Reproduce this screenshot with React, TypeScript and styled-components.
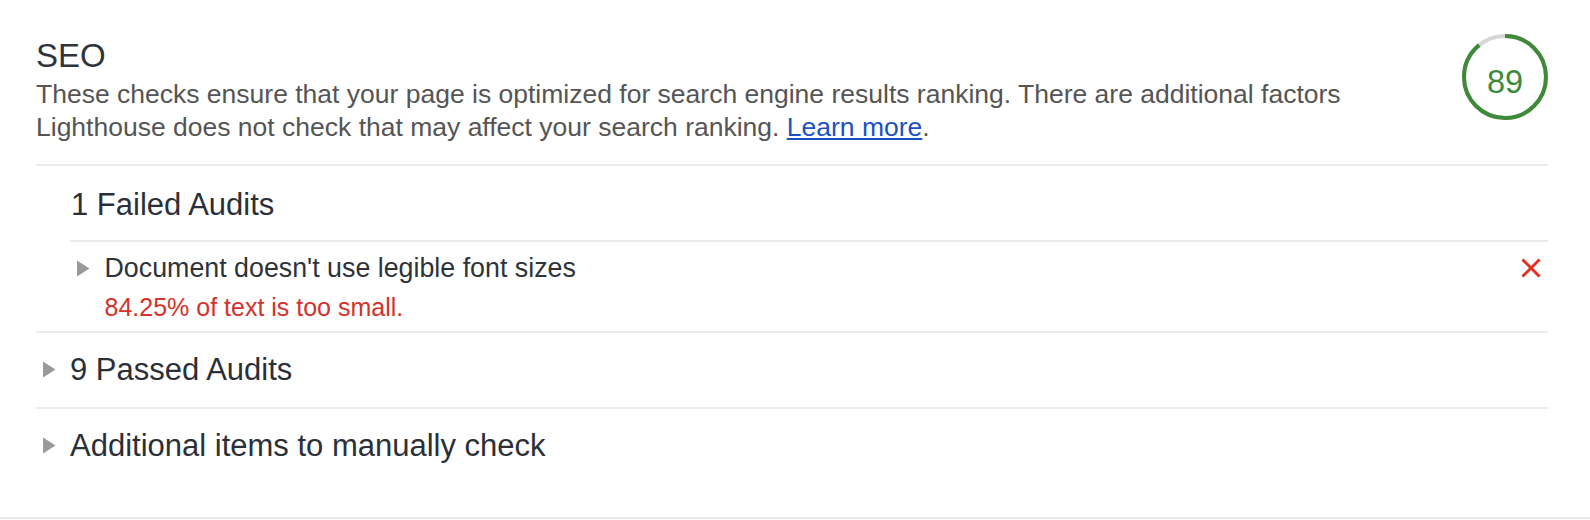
import React from "react";
import styled, { createGlobalStyle } from "styled-components";

const GlobalStyle = createGlobalStyle`
  html, body {
    margin: 0;
    padding: 0;
    background: #ffffff;
  }
  body {
    font-family: "Liberation Sans", Arial, Helvetica, sans-serif;
    -webkit-font-smoothing: antialiased;
  }
`;

const Section = styled.section`
  padding: 0 42px 34px 36px;
  border-bottom: 2px solid #e8e8e8;
`;

const Header = styled.header`
  display: flex;
  align-items: flex-start;
  gap: 40px;
  padding: 34px 0 20px;
  border-bottom: 2px solid #ebebeb;
`;

const HeaderText = styled.div`
  flex: 1;
  min-width: 0;
`;

const Title = styled.h2`
  margin: 0;
  font-size: 33px;
  line-height: 44px;
  font-weight: 400;
  color: #2f353d;
`;

const Description = styled.p`
  margin: 0;
  font-size: 26.5px;
  line-height: 33px;
  color: #555555;
`;

const Link = styled.a`
  color: #1a52c4;
  text-decoration: underline;
  text-underline-offset: 2px;
`;

const Gauge = styled.div`
  display: grid;
  width: 86px;
  height: 86px;
  flex: none;
  & > * {
    grid-area: 1 / 1;
  }
`;

const GaugeValue = styled.span`
  justify-self: center;
  align-self: center;
  padding-top: 9px;
  font-size: 32.5px;
  line-height: 32px;
  color: #3e8a3a;
`;

const GroupTitle = styled.div<{ $indent: number; $top?: number }>`
  display: flex;
  align-items: center;
  gap: 14px;
  padding: ${(p) => p.$top ?? 19}px 0 ${(p) => 38 - (p.$top ?? 19)}px ${(p) => p.$indent}px;
  font-size: 31px;
  line-height: 36px;
  color: #2b3038;
`;

const Group = styled.div<{ $divider?: boolean }>`
  border-bottom: ${(p) => (p.$divider ? "2px solid #ebebeb" : "none")};
`;

const AuditList = styled.div`
  margin-left: 34px;
`;

const AuditRow = styled.div`
  display: grid;
  grid-template-columns: 14px 1fr auto;
  column-gap: 14.5px;
  align-items: start;
  padding: 10px 7px 8px 6px;
  border-top: 2px solid #ebebeb;
`;

const IconCell = styled.div`
  height: 32px;
  display: flex;
  align-items: center;
  justify-content: center;
`;

const AuditBody = styled.div`
  display: flex;
  flex-direction: column;
  gap: 6.5px;
`;

const AuditTitle = styled.div`
  font-size: 26.8px;
  line-height: 32px;
  color: #2e333a;
`;

const AuditDetail = styled.div`
  font-size: 25px;
  line-height: 32px;
  color: #d4322a;
`;

const ArrowSvg = styled.svg`
  flex: none;
  display: block;
`;

const Arrow = () => (
  <ArrowSvg width="14" height="17" viewBox="0 0 14 17" aria-hidden="true">
    <polygon points="1,0.5 13.5,8.5 1,16.5" fill="#9a9a9a" />
  </ArrowSvg>
);

const FailIcon = () => (
  <svg width="20" height="20" viewBox="0 0 20 20" aria-hidden="true">
    <path
      d="M2.5 2.5 L17.5 17.5 M17.5 2.5 L2.5 17.5"
      stroke="#e2311d"
      strokeWidth="3"
      strokeLinecap="square"
      fill="none"
    />
  </svg>
);

const ScoreGauge = ({ score }: { score: number }) => {
  const r = 41;
  const c = 2 * Math.PI * r;
  return (
    <Gauge>
      <svg width="86" height="86" viewBox="0 0 86 86" aria-hidden="true">
        <circle cx="43" cy="43" r={r} fill="none" stroke="#d6d6d6" strokeWidth="4" />
        <circle
          cx="43"
          cy="43"
          r={r}
          fill="none"
          stroke="#3e8a3a"
          strokeWidth="4"
          strokeDasharray={`${(score / 100) * c} ${c}`}
          transform="rotate(-90 43 43)"
        />
      </svg>
      <GaugeValue>{score}</GaugeValue>
    </Gauge>
  );
};

export default function App() {
  return (
    <>
      <GlobalStyle />
      <Section>
        <Header>
          <HeaderText>
            <Title>SEO</Title>
            <Description>
              These checks ensure that your page is optimized for search engine results ranking.
              There are additional factors Lighthouse does not check that may affect your search
              ranking. <Link href="#">Learn more</Link>.
            </Description>
          </HeaderText>
          <ScoreGauge score={89} />
        </Header>

        <Group $divider>
          <GroupTitle $indent={35} $top={21}>
            1 Failed Audits
          </GroupTitle>
          <AuditList>
            <AuditRow>
              <IconCell>
                <Arrow />
              </IconCell>
              <AuditBody>
                <AuditTitle>Document doesn't use legible font sizes</AuditTitle>
                <AuditDetail>84.25% of text is too small.</AuditDetail>
              </AuditBody>
              <IconCell>
                <FailIcon />
              </IconCell>
            </AuditRow>
          </AuditList>
        </Group>

        <Group $divider>
          <GroupTitle $indent={6}>
            <Arrow />
            9 Passed Audits
          </GroupTitle>
        </Group>

        <Group>
          <GroupTitle $indent={6}>
            <Arrow />
            Additional items to manually check
          </GroupTitle>
        </Group>
      </Section>
    </>
  );
}
